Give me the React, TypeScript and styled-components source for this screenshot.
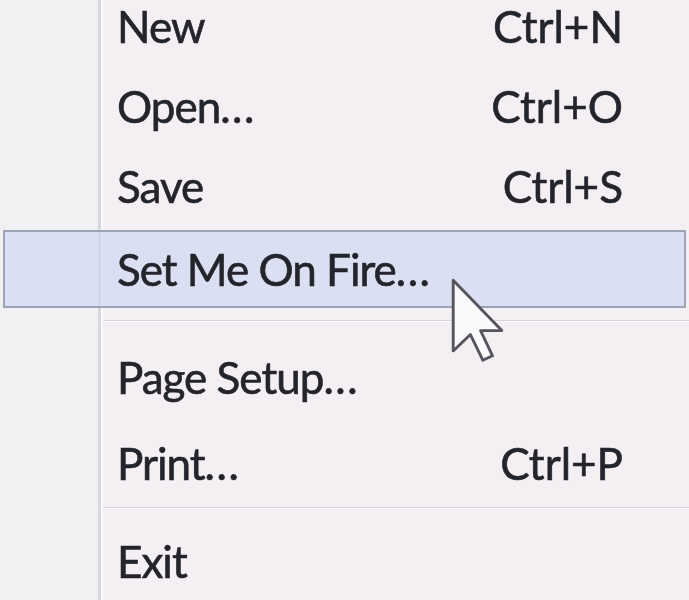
import * as React from 'react';
import styled, { createGlobalStyle } from 'styled-components';

const GlobalStyle = createGlobalStyle`
  html, body {
    margin: 0;
    padding: 0;
    height: 100%;
    overflow: hidden;
    background: #f4eff3;
  }
  #root {
    height: 100%;
  }
`;

const Page = styled.div`
  position: relative;
  width: 689px;
  height: 600px;
  overflow: hidden;
  font-family: Lato, "Open Sans", "Liberation Sans", sans-serif;
  filter: blur(0.5px);
`;

const Menu = styled.div`
  display: flex;
  flex-direction: column;
  margin-top: -14px;
  min-height: 640px;
  background: linear-gradient(
    to right,
    #f1f0f3 0,
    #f1f0f3 98px,
    #d9d7df 98px,
    #d9d7df 101px,
    #fbfafc 101px,
    #fbfafc 103px,
    #f4eff3 103px
  );
`;

const Item = styled.div<{ $h: number; $active?: boolean }>`
  display: flex;
  align-items: center;
  justify-content: space-between;
  box-sizing: border-box;
  height: ${p => p.$h}px;
  padding: 0 66px 0 117px;
  font-size: 44px;
  color: #24242c;
  -webkit-text-stroke: 0.6px #24242c;
  ${p => p.$active && `
    margin: 4px 3px 0;
    padding: 0 61px 0 112px;
    border: 2px solid #9ca3b7;
    background: rgba(202, 214, 240, 0.62);
  `}
`;

const Label = styled.span`
  white-space: nowrap;
  letter-spacing: -1px;
`;

const Dots = styled.span`
  letter-spacing: 1.5px;
`;

const Shortcut = styled.span`
  white-space: nowrap;
`;

const Separator = styled.div<{ $before: number; $after: number }>`
  margin: ${p => p.$before}px 0 ${p => p.$after}px 103px;
  height: 0;
  border-top: 1px solid #d5d1d7;
  border-bottom: 1px solid #fdfbfd;
`;

const Cursor = styled.svg`
  position: absolute;
  left: 451px;
  top: 278px;
  width: 53px;
  height: 84px;
  overflow: visible;
`;

type Entry =
  | { kind: 'item'; label: string; dots?: boolean; shortcut?: string; h: number; active?: boolean }
  | { kind: 'sep'; before: number; after: number };

const entries: Entry[] = [
  { kind: 'item', label: 'New', shortcut: 'Ctrl+N', h: 80 },
  { kind: 'item', label: 'Open', dots: true, shortcut: 'Ctrl+O', h: 80 },
  { kind: 'item', label: 'Save', shortcut: 'Ctrl+S', h: 80 },
  { kind: 'item', label: 'Set Me On Fire', dots: true, h: 78, active: true },
  { kind: 'sep', before: 12, after: 12 },
  { kind: 'item', label: 'Page Setup', dots: true, h: 86 },
  { kind: 'item', label: 'Print', dots: true, shortcut: 'Ctrl+P', h: 86 },
  { kind: 'sep', before: 1, after: 9 },
  { kind: 'item', label: 'Exit', h: 86 },
];

const App: React.FC = () => {
  return (
    <>
      <GlobalStyle />
      <Page>
        <Menu>
          {entries.map((e, i) =>
            e.kind === 'sep' ? (
              <Separator key={i} $before={e.before} $after={e.after} />
            ) : (
              <Item key={i} $h={e.h} $active={e.active}>
                <Label>
                  {e.label}
                  {e.dots && <Dots>...</Dots>}
                </Label>
                {e.shortcut && <Shortcut>{e.shortcut}</Shortcut>}
              </Item>
            )
          )}
        </Menu>
        <Cursor viewBox="0 0 12 19">
          <path
            d="M0.5 0.5 L0.5 16.5 L4.4 12.8 L7.2 18.6 L9.4 17.6 L6.7 11.9 L11.5 11.9 Z"
            fill="#f9f9fb"
            stroke="#55545f"
            strokeWidth="0.65"
            strokeLinejoin="round"
          />
        </Cursor>
      </Page>
    </>
  );
};

export default App;
